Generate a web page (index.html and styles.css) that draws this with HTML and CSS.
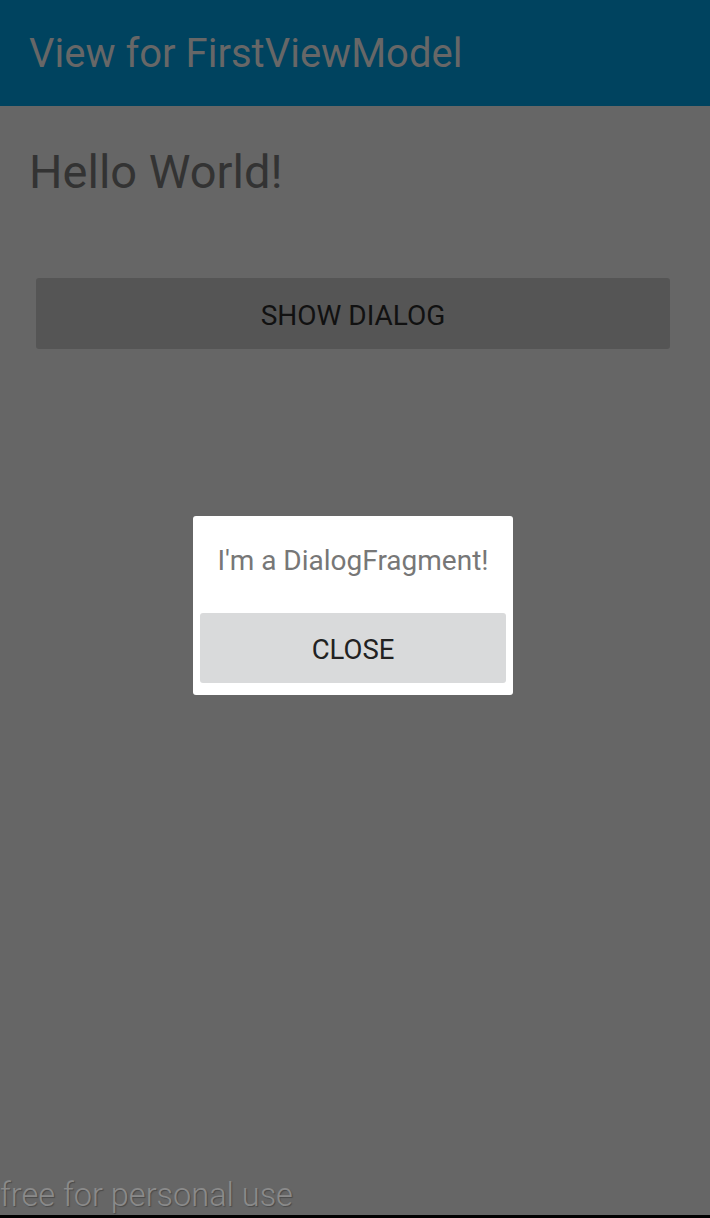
FILE: index.html
```html
<!DOCTYPE html>
<html>
<head>
<meta charset="utf-8">
<link rel="stylesheet" href="styles.css">
</head>
<body>
<div class="screen">
  <header class="appbar"><span class="title">View for FirstViewModel</span></header>
  <main class="content">
    <h1 class="hello">Hello World!</h1>
    <div class="show-btn">SHOW DIALOG</div>
  </main>
  <div class="watermark">free for personal use</div>
  <div class="dialog">
    <p class="dialog-text">I'm a DialogFragment!</p>
    <div class="close-btn">CLOSE</div>
  </div>
</div>
</body>
</html>
```

FILE: styles.css
```css
html, body {
  margin: 0;
  padding: 0;
  background: #000;
}
.screen {
  position: relative;
  width: 710px;
  height: 1215px;
  background: #666666;
  font-family: Roboto, "Noto Sans", sans-serif;
  overflow: hidden;
  display: flex;
  flex-direction: column;
}
.appbar {
  height: 106px;
  background: #00435f;
  display: flex;
  align-items: center;
  padding-left: 29px;
  box-sizing: border-box;
}
.title {
  color: #676767;
  font-size: 40px;
  font-weight: 400;
}
.content {
  flex: 1;
  padding: 0 40px 0 29px;
}
.hello {
  margin: 38px 0 0;
  font-size: 47px;
  font-weight: 400;
  color: #333333;
  line-height: 56px;
}
.show-btn {
  margin: 78px 0 0 7px;
  height: 71px;
  padding-top: 3px;
  box-sizing: border-box;
  background: #555555;
  border-radius: 3px;
  display: flex;
  align-items: center;
  justify-content: center;
  color: #111111;
  font-size: 28px;
}
.watermark {
  height: 40px;
  color: #8a8a8a;
  font-size: 32.5px;
  font-weight: 300;
  line-height: 40px;
  text-shadow: 1px 1px 1px #4a4a4a;
}
.dialog {
  position: absolute;
  left: 193px;
  top: 516px;
  width: 320px;
  height: 179px;
  background: #ffffff;
  border-radius: 3px;
  box-sizing: border-box;
  padding: 0 7px 12px 7px;
  display: flex;
  flex-direction: column;
}
.dialog-text {
  margin: 0;
  height: 97px;
  padding-bottom: 8px;
  box-sizing: border-box;
  display: flex;
  align-items: center;
  justify-content: center;
  color: #777777;
  font-size: 28px;
}
.close-btn {
  height: 70px;
  background: #d9dadb;
  border-radius: 3px;
  display: flex;
  align-items: center;
  justify-content: center;
  color: #222222;
  font-size: 27.5px;
  padding-top: 3px;
  box-sizing: border-box;
}
```
